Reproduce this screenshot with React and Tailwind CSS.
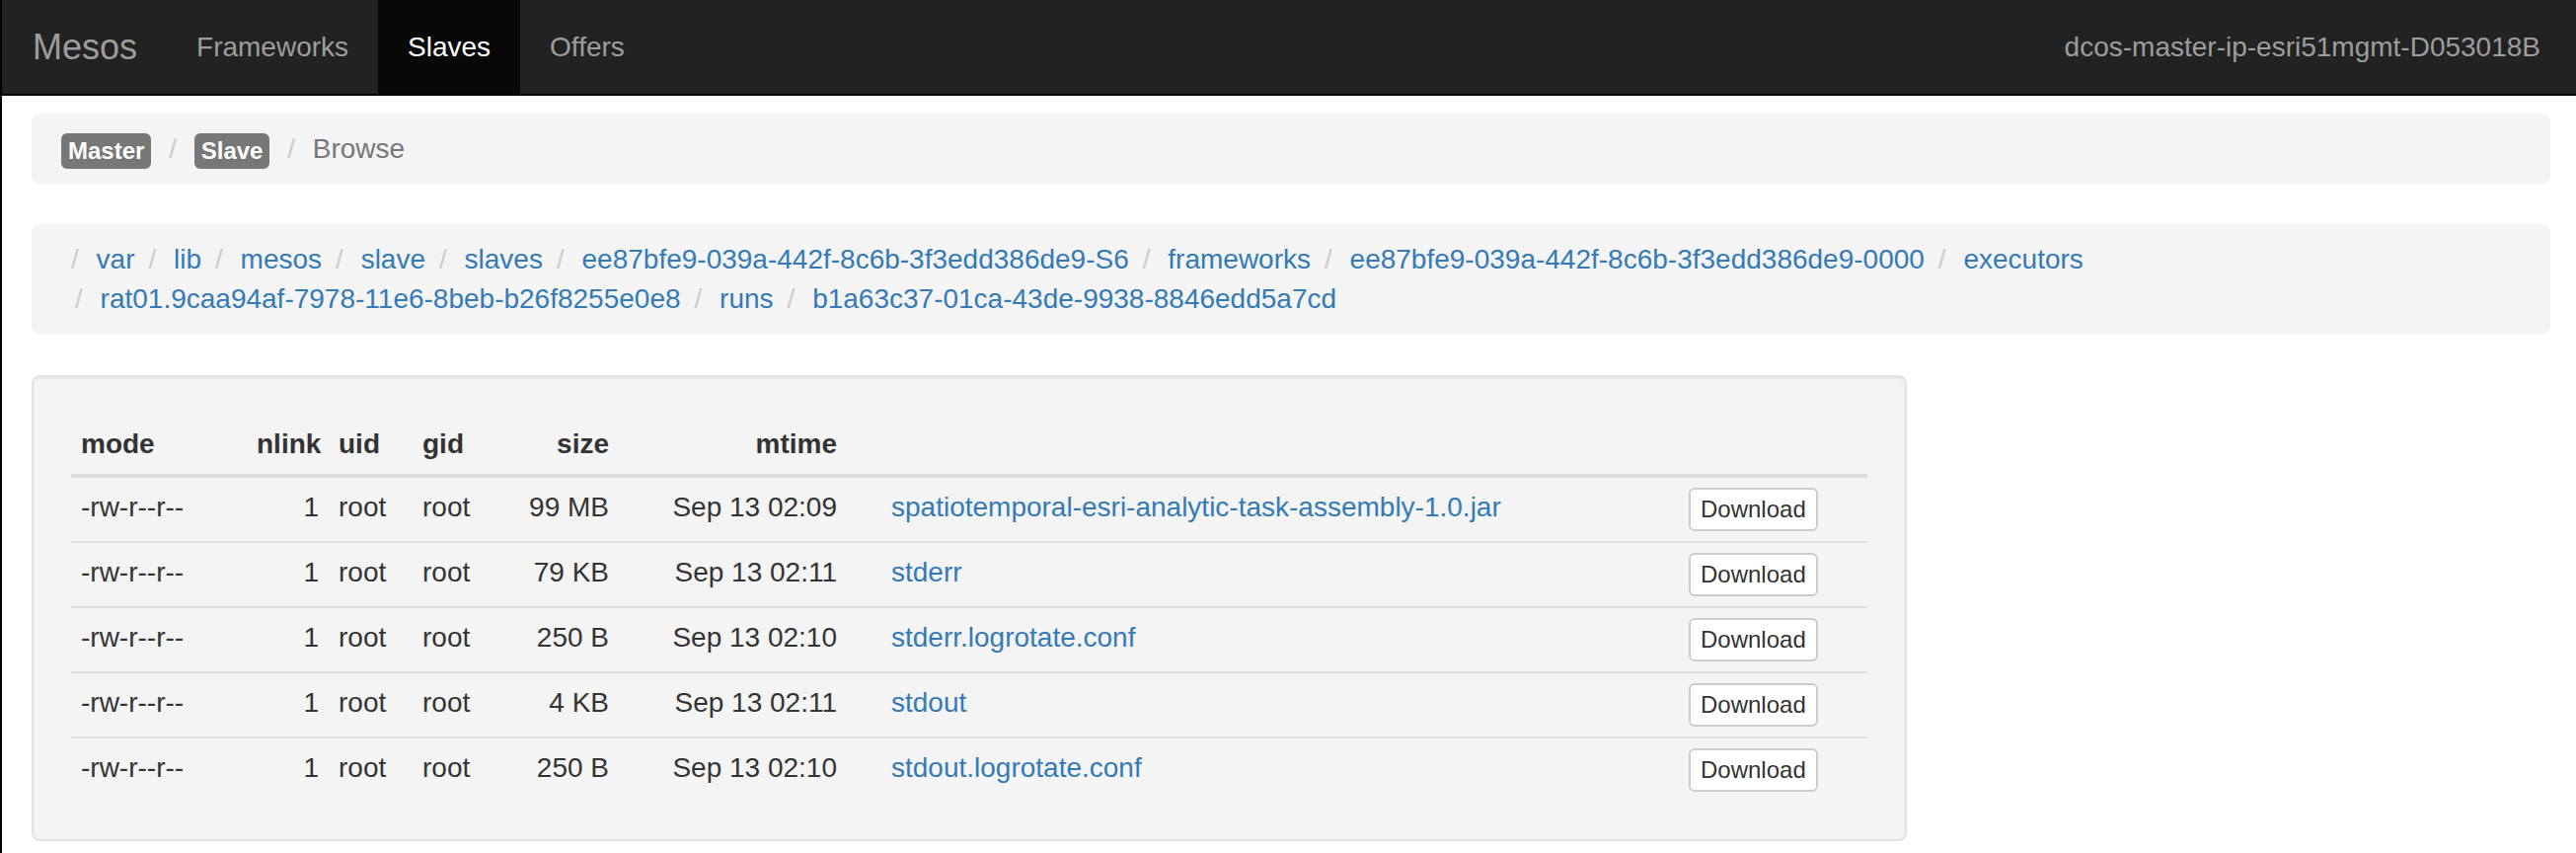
import React from "react";

const font = { fontFamily: '"Liberation Sans", Arial, Helvetica, sans-serif' };

const pathItems = [
  "var",
  "lib",
  "mesos",
  "slave",
  "slaves",
  "ee87bfe9-039a-442f-8c6b-3f3edd386de9-S6",
  "frameworks",
  "ee87bfe9-039a-442f-8c6b-3f3edd386de9-0000",
  "executors",
  "rat01.9caa94af-7978-11e6-8beb-b26f8255e0e8",
  "runs",
  "b1a63c37-01ca-43de-9938-8846edd5a7cd",
];

const files = [
  { size: "99 MB", mtime: "Sep 13 02:09", name: "spatiotemporal-esri-analytic-task-assembly-1.0.jar" },
  { size: "79 KB", mtime: "Sep 13 02:11", name: "stderr" },
  { size: "250 B", mtime: "Sep 13 02:10", name: "stderr.logrotate.conf" },
  { size: "4 KB", mtime: "Sep 13 02:11", name: "stdout" },
  { size: "250 B", mtime: "Sep 13 02:10", name: "stdout.logrotate.conf" },
];

function Sep() {
  return <span className="px-[10px] text-[#cccccc]">/{"\u00a0"}</span>;
}

export default function App() {
  return (
    <div
      className="min-h-screen bg-white border-l-2 border-black text-[#333333] text-[28px] leading-[40px]"
      style={font}
    >
      {/* Navbar */}
      <nav className="flex h-[97px] bg-[#222222] border-b-2 border-[#050505]">
        <div className="flex items-center pl-[31px] pr-[30px] text-[36px] text-[#9d9d9d]">Mesos</div>
        <a className="flex items-center px-[30px] text-[#9d9d9d]">Frameworks</a>
        <a className="flex items-center px-[30px] bg-[#080808] text-white">Slaves</a>
        <a className="flex items-center px-[30px] text-[#9d9d9d]">Offers</a>
        <div className="ml-auto flex items-center pr-[36px] text-[#9d9d9d]">dcos-master-ip-esri51mgmt-D053018B</div>
      </nav>

      {/* Breadcrumb 1 */}
      <div className="ml-[30px] mr-[26px] mt-[18px] rounded-[8px] bg-[#f4f4f4] px-[30px] py-[16px] h-[72px]">
        <span className="inline-block align-middle h-[36px] leading-[36px] px-[7px] rounded-[6px] bg-[#777777] text-white text-[24px] font-bold">
          Master
        </span>{" "}
        <Sep />
        <span className="inline-block align-middle h-[36px] leading-[36px] px-[7px] rounded-[6px] bg-[#777777] text-white text-[24px] font-bold">
          Slave
        </span>{" "}
        <Sep />
        <span className="text-[#777777]">Browse</span>
      </div>

      {/* Breadcrumb 2 (path) */}
      <div className="ml-[30px] mr-[26px] mt-[40px] flex flex-wrap rounded-[8px] bg-[#f4f4f4] px-[30px] py-[16px]">
        {pathItems.map((it, i) => (
          <span key={i} className={i > 0 ? "whitespace-nowrap pl-[4px]" : "whitespace-nowrap"}>
            <Sep />
            <a className="text-[#337ab7]">{it}</a>
          </span>
        ))}
      </div>

      {/* Well with table */}
      <div className="ml-[30px] mt-[41px] w-[1900px] rounded-[8px] border-2 border-[#e3e3e3] bg-[#f4f4f4] p-[38px] shadow-[inset_0_2px_2px_rgba(0,0,0,0.05)]">
        <table className="w-full table-fixed border-collapse">
          <colgroup>
            <col className="w-[178px]" />
            <col className="w-[83px]" />
            <col className="w-[85px]" />
            <col className="w-[85px]" />
            <col className="w-[124px]" />
            <col className="w-[231px]" />
            <col className="w-[843px]" />
            <col className="w-[191px]" />
          </colgroup>
          <thead>
            <tr className="font-bold">
              <th className="border-b-4 border-[#dddddd] p-[10px] text-left align-top">mode</th>
              <th className="border-b-4 border-[#dddddd] p-[10px] text-right align-top">nlink</th>
              <th className="border-b-4 border-[#dddddd] p-[10px] text-left align-top">uid</th>
              <th className="border-b-4 border-[#dddddd] p-[10px] text-left align-top">gid</th>
              <th className="border-b-4 border-[#dddddd] p-[10px] text-right align-top">size</th>
              <th className="border-b-4 border-[#dddddd] p-[10px] text-right align-top">mtime</th>
              <th className="border-b-4 border-[#dddddd] p-[10px] align-top"></th>
              <th className="border-b-4 border-[#dddddd] p-[10px] align-top"></th>
            </tr>
          </thead>
          <tbody>
            {files.map((f, i) => {
              const b = i > 0 ? "border-t-2 border-[#dddddd]" : "";
              return (
                <tr key={i}>
                  <td className={`${b} p-[10px] text-left align-top`}>-rw-r--r--</td>
                  <td className={`${b} p-[10px] text-right align-top`}>1</td>
                  <td className={`${b} p-[10px] text-left align-top`}>root</td>
                  <td className={`${b} p-[10px] text-left align-top`}>root</td>
                  <td className={`${b} p-[10px] text-right align-top`}>{f.size}</td>
                  <td className={`${b} p-[10px] text-right align-top`}>{f.mtime}</td>
                  <td className={`${b} py-[10px] pl-[45px] pr-[10px] text-left align-top whitespace-nowrap`}>
                    <a className="text-[#337ab7]">{f.name}</a>
                  </td>
                  <td className={`${b} p-[10px] text-left align-top`}>
                    <button className="h-[44px] rounded-[6px] border-2 border-[#cccccc] bg-white px-[10px] py-[2px] text-[24px] leading-[36px] text-[#333333]">
                      Download
                    </button>
                  </td>
                </tr>
              );
            })}
          </tbody>
        </table>
      </div>
    </div>
  );
}
